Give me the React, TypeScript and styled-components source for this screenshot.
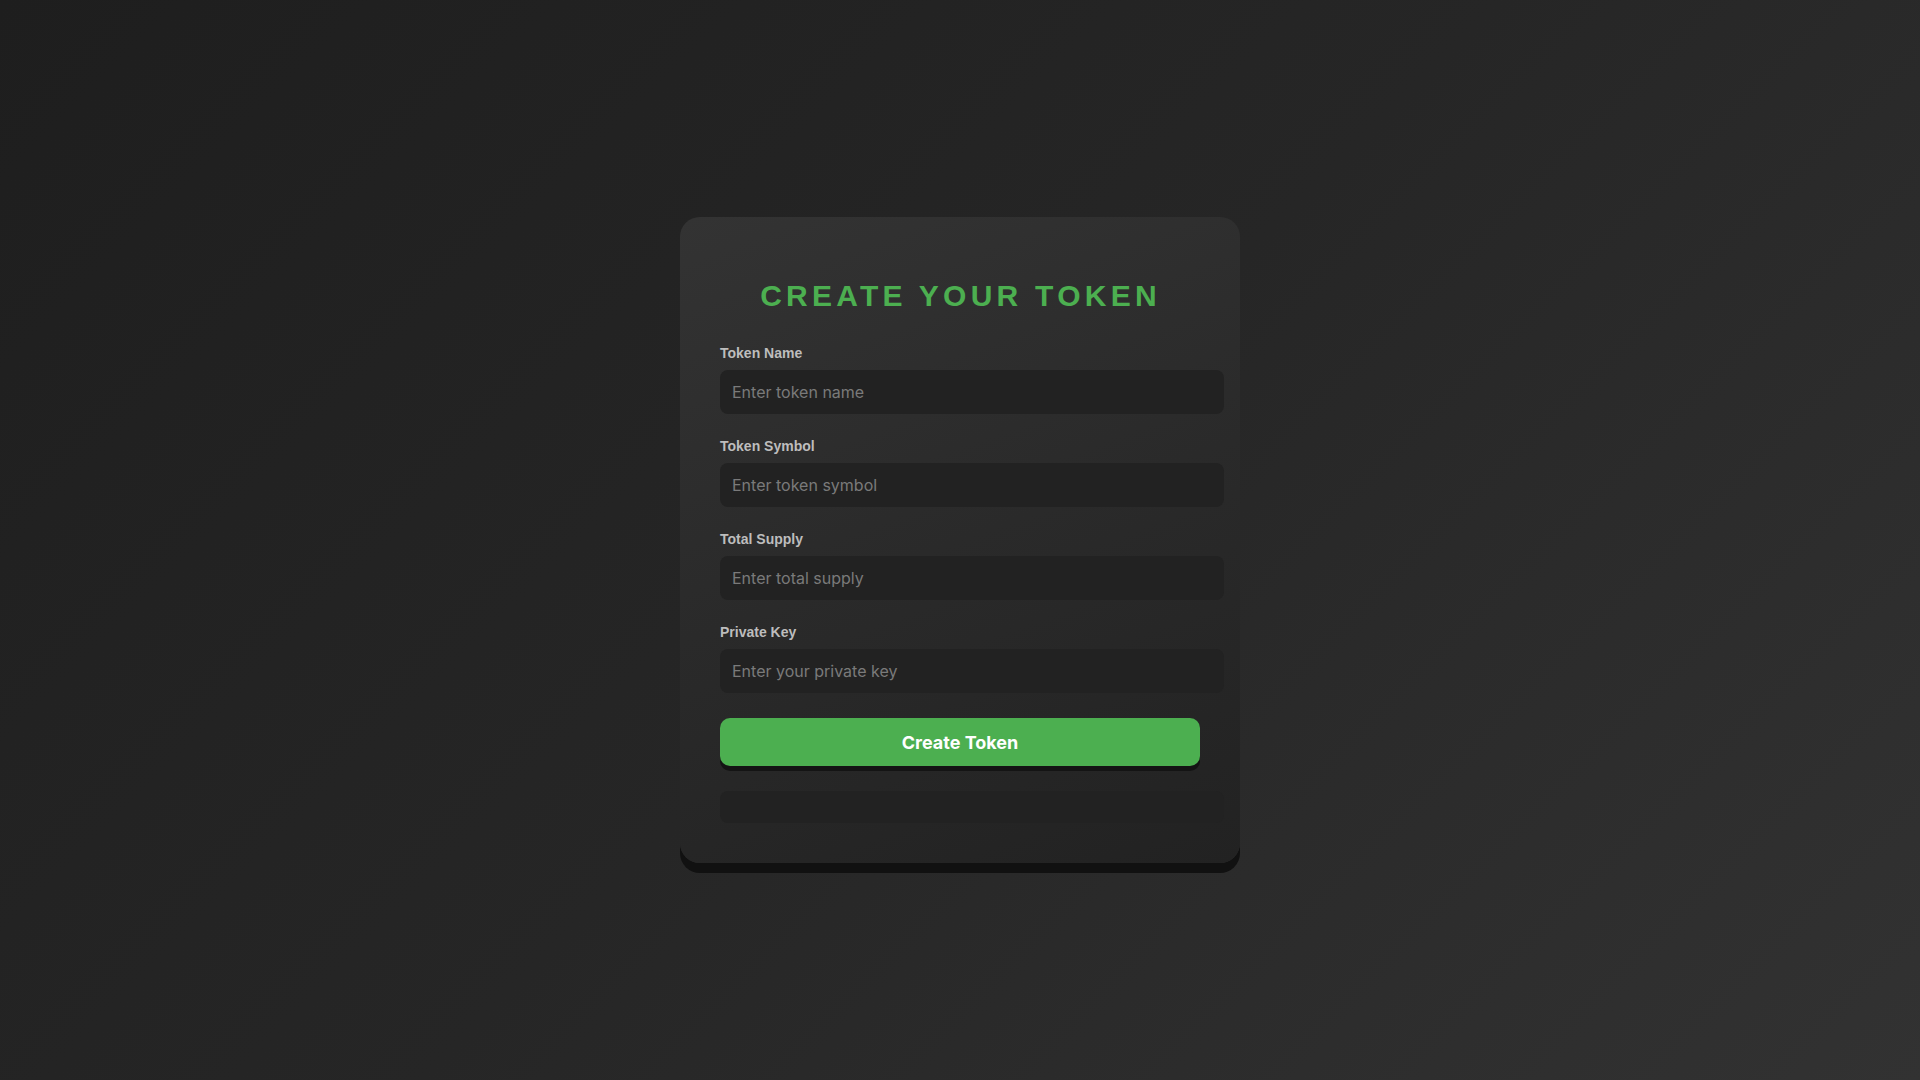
import React from "react";
import styled, { createGlobalStyle } from "styled-components";

const GlobalStyle = createGlobalStyle`
  * { box-sizing: content-box; }
  html, body { margin: 0; padding: 0; }
  body {
    min-height: 100vh;
    background: linear-gradient(135deg, #1e1e1e 0%, #262626 50%, #323232 100%);
    font-family: "Liberation Sans", Arial, sans-serif;
  }
  #root { min-height: 100vh; }
`;

const Page = styled.div`
  min-height: 1080px;
  display: flex;
  align-items: flex-start;
  justify-content: center;
  padding-top: 217px;
  box-sizing: border-box;
`;

const Card = styled.div`
  width: 480px;
  padding: 40px;
  border-radius: 20px;
  background: linear-gradient(160deg, #333333 0%, #2a2a2a 50%, #222222 100%);
  box-shadow: 0 10px 0 #111111;
  display: flex;
  flex-direction: column;
`;

const Title = styled.h1`
  margin: 21px 0 32px;
  font-family: "Liberation Sans", Arial, sans-serif;
  font-size: 30px;
  line-height: 35px;
  font-weight: 700;
  letter-spacing: 4.25px;
  text-align: center;
  color: #4caf50;
  text-indent: 1px;
`;

const Group = styled.div`
  display: flex;
  flex-direction: column;
  margin-bottom: 24px;
`;

const Label = styled.label`
  display: block;
  font-family: "Liberation Sans", Arial, sans-serif;
  font-size: 14px;
  line-height: 16px;
  font-weight: 700;
  color: #bdbdbd;
  margin-bottom: 9px;
`;

const Input = styled.input`
  width: 100%;
  height: 20px;
  padding: 12px;
  border: none;
  outline: none;
  border-radius: 8px;
  background: #222222;
  color: #e0e0e0;
  font-family: Inter, "Noto Sans", sans-serif;
  font-size: 16px;
  line-height: 20px;
  &::placeholder {
    color: #7a7a7a;
  }
`;

const Button = styled.button`
  width: 100%;
  box-sizing: border-box;
  margin-top: 1px;
  height: 48px;
  padding: 0;
  border: none;
  border-radius: 10px;
  background: #4caf50;
  color: #ffffff;
  font-family: Inter, "Noto Sans", sans-serif;
  font-size: 18px;
  font-weight: 700;
  box-shadow: 0 5px 0 #141414;
  cursor: pointer;
`;

const Status = styled.div`
  margin-top: 25px;
  width: 100%;
  height: 32px;
  padding: 0 12px;
  border-radius: 8px;
  background: #222222;
`;

const fields = [
  { label: "Token Name", placeholder: "Enter token name" },
  { label: "Token Symbol", placeholder: "Enter token symbol" },
  { label: "Total Supply", placeholder: "Enter total supply" },
  { label: "Private Key", placeholder: "Enter your private key" },
];

export default function App() {
  return (
    <>
      <GlobalStyle />
      <Page>
        <Card>
          <Title>CREATE YOUR TOKEN</Title>
          {fields.map((f) => (
            <Group key={f.label}>
              <Label>{f.label}</Label>
              <Input placeholder={f.placeholder} />
            </Group>
          ))}
          <Button>Create Token</Button>
          <Status />
        </Card>
      </Page>
    </>
  );
}
